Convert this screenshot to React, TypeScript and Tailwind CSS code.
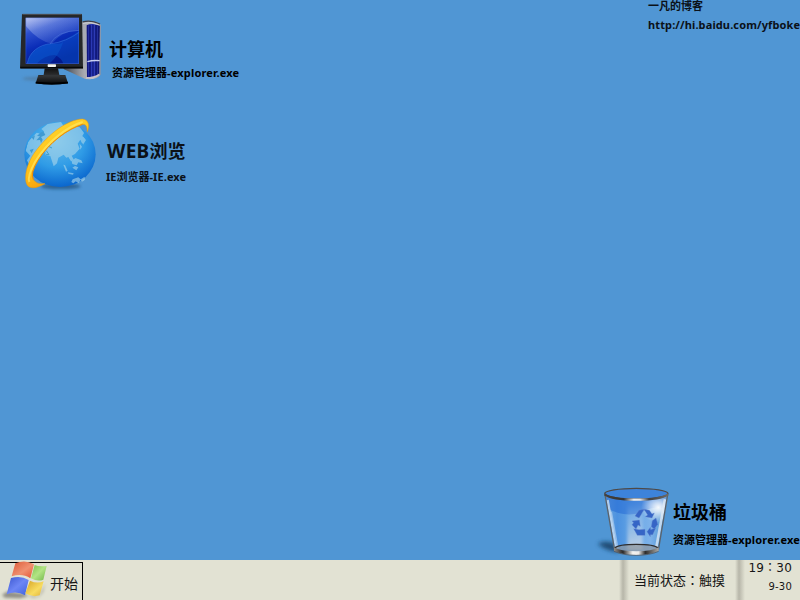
import React from "react";

const CJK = "font-['Noto_Sans','Noto_Sans_CJK_SC',sans-serif]";

function ComputerIcon() {
  return (
    <svg className="block h-[90px] w-[100px]" viewBox="0 0 300 270">
      <defs>
        <linearGradient id="screen" x1="0" y1="0" x2="0.45" y2="1">
          <stop offset="0" stopColor="#8fa2ea" />
          <stop offset="0.3" stopColor="#2c4fcd" />
          <stop offset="0.6" stopColor="#0a2db8" />
          <stop offset="1" stopColor="#031a8c" />
        </linearGradient>
        <linearGradient id="gloss" x1="0" y1="0" x2="0.8" y2="1">
          <stop offset="0" stopColor="#fff" stopOpacity=".4" />
          <stop offset="1" stopColor="#6b93f0" stopOpacity=".15" />
        </linearGradient>
        <linearGradient id="tower" x1="0" x2="1">
          <stop offset="0" stopColor="#0b0f78" />
          <stop offset="0.5" stopColor="#2638bd" />
          <stop offset="1" stopColor="#0a0d60" />
        </linearGradient>
        <linearGradient id="side" x1="0" x2="1">
          <stop offset="0" stopColor="#3c4148" />
          <stop offset="0.5" stopColor="#9b9ea5" />
          <stop offset="0.8" stopColor="#d0d1d4" />
          <stop offset="1" stopColor="#888b92" />
        </linearGradient>
        <linearGradient id="stand" x1="0" y1="0" x2="0" y2="1">
          <stop offset="0" stopColor="#111" />
          <stop offset="0.5" stopColor="#303234" />
          <stop offset="1" stopColor="#050505" />
        </linearGradient>
        <filter id="soft" x="-30%" y="-100%" width="160%" height="300%">
          <feGaussianBlur stdDeviation="5" />
        </filter>
        <clipPath id="screenClip"><path d="M47 38H207V176H47Z" /></clipPath>
      </defs>
      <ellipse cx="90" cy="221" rx="52" ry="6" fill="#50718e" opacity=".6" filter="url(#soft)" />
      <path d="M158 185L216 50Q243 42 270 56L271 210Q263 221 240 223L226 222L162 193Z" fill="url(#side)" />
      <path d="M217 52Q242 43 271 57L269 212Q254 222 225 221Z" fill="#a9abb4" />
      <path d="M230 61Q248 52 270 63L268 209Q252 218 231 216Z" fill="url(#tower)" />
      <path d="M236 61V215M244 59V216M253 59V215M262 62V212" stroke="#4654c8" strokeWidth="2" opacity=".6" />
      <path d="M240 61V215M249 59V216M258 60V214" stroke="#080a58" strokeWidth="2.5" />
      <path d="M218 51Q243 44 270 57" fill="none" stroke="#3c3f49" strokeWidth="4" />
      <path d="M218 55Q243 49 266 59" fill="none" stroke="#d2d3d8" strokeWidth="3" />
      <path d="M271 60L270 210" stroke="#9497a6" strokeWidth="3" />
      <path d="M232 170Q248 165 269 167" fill="none" stroke="#c9d0f0" strokeWidth="4" />
      <path d="M228 219Q254 219 268 208" fill="none" stroke="#c9c2c8" strokeWidth="5" />
      <path d="M36 27H216L219 190H30Z" fill="#252729" />
      <path d="M37 28H215" stroke="#505459" strokeWidth="3" />
      <path d="M31 188H219" stroke="#070707" strokeWidth="5" />
      <path d="M47 38H207V176H47Z" fill="url(#screen)" />
      <g clipPath="url(#screenClip)">
        <path d="M52 176C56 142 88 118 124 116Q170 106 207 78V176H160Q155 160 135 150Q104 150 80 176Z" fill="#0750cc" opacity=".5" />
        <path d="M52 176C56 142 88 118 124 116Q152 120 160 110Q148 150 118 176Z" fill="#0b63d8" opacity=".35" />
        <path d="M47 38H207V78Q180 77 158 88Q136 102 126 116Q84 108 47 62Z" fill="url(#gloss)" />
        <path d="M52 176C56 142 88 118 124 116Q170 110 207 82" fill="none" stroke="#3f77e0" strokeWidth="2" opacity=".7" />
        <path d="M120 117Q140 78 207 76" fill="none" stroke="#5e85e2" strokeWidth="2" opacity=".6" />
        <path d="M47 38H207V176H47Z" fill="none" stroke="#4c75e8" strokeWidth="3" opacity=".7" />
      </g>
      <rect x="113" y="178" width="25" height="8" rx="2" fill="#f0f1ef" />
      <path d="M104 190H144L148 210H166L174 235Q125 243 77 235L85 210H101Z" fill="url(#stand)" />
      <path d="M99 211H151" stroke="#3a3c3e" strokeWidth="2" />
      <path d="M77 233Q125 238 174 233" stroke="#000" strokeWidth="5" fill="none" />
    </svg>
  );
}

function GlobeIcon() {
  return (
    <svg className="block h-[90px] w-[90px]" viewBox="0 0 270 270">
      <defs>
        <radialGradient id="ocean" cx=".45" cy=".3" r=".72">
          <stop offset="0" stopColor="#62bbeb" />
          <stop offset=".55" stopColor="#2f9be6" />
          <stop offset="1" stopColor="#0863cc" />
        </radialGradient>
        <linearGradient id="ring" x1=".2" y1="0" x2=".7" y2="1">
          <stop offset="0" stopColor="#ffdc35" />
          <stop offset=".55" stopColor="#ffc018" />
          <stop offset="1" stopColor="#f38b05" />
        </linearGradient>
        <filter id="globeShadow" x="-30%" y="-100%" width="160%" height="300%"><feGaussianBlur stdDeviation="5" /></filter>
        <clipPath id="globeClip"><circle cx="135" cy="137" r="104" /></clipPath>
      </defs>
      <ellipse cx="137" cy="229" rx="60" ry="9" fill="#16426c" opacity=".6" filter="url(#globeShadow)" />
      <ellipse cx="135" cy="133" rx="107" ry="98" fill="url(#ocean)" />
      <g clipPath="url(#globeClip)" fill="#a9d6ea" opacity=".62">
        <path d="M32 122L39 96L53 80L65 68L79 72L87 64L79 57L98 42L138 36L147 50L90 90L59 132L41 161L36 151L46 137Z" />
        <path d="M90 110L126 76L171 48L194 51L207 69L202 78L210 87L202 102L196 89L188 101L194 116L180 132L170 137L177 150L168 154L160 141L154 143L146 134L130 143L126 160L116 169L106 138L92 135Z" />
        <path d="M145 164L150 165L158 182L153 185ZM159 187L176 190L174 194L160 191ZM170 153L181 144L199 151L203 160L190 157L185 166L172 162ZM172 173L180 168L190 172L184 181ZM194 101L201 110L196 119ZM204 80L213 90L204 104Z" />
        <path d="M173 208L190 202L197 208L209 200L210 211L201 215L197 209L191 220L182 214L175 220L169 216Z" />
      </g>
      <path d="M75 69L66 78L75 79L64 91L75 90L78 100L83 89L78 81L91 75L85 64ZM50 82L60 76L56 90ZM44 120L56 116L50 130Z" fill="#3f9bd4" />
      <path d="M94 122L102 134L93 133M100 109L111 114" fill="none" stroke="#459fca" strokeWidth="3" />
      <path d="M55 209Q45 190 69 151C102 97 158 57 203 43Q217 41 217 65C225 45 220 29 202 27C156 29 99 73 60 126C29 169 24 221 43 231Q58 239 90 221Q66 224 55 209Z" fill="url(#ring)" stroke="#ec9906" strokeWidth="1.5" />
      <path d="M43 216Q36 200 60 156C97 95 159 48 203 36" fill="none" stroke="#ffe65e" strokeWidth="6" opacity=".75" />
      <path d="M55 209Q45 190 69 151C102 97 158 57 203 43" fill="none" stroke="#ef8d05" strokeWidth="3" />
    </svg>
  );
}

function TrashIcon() {
  return (
    <svg className="block h-[85px] w-[90px]" viewBox="0 0 270 255">
      <defs>
        <linearGradient id="glass" x1="0" x2="1">
          <stop offset="0" stopColor="#6da6dc" />
          <stop offset=".2" stopColor="#4c92e0" />
          <stop offset=".42" stopColor="#62a3e4" />
          <stop offset=".72" stopColor="#7db2ea" />
          <stop offset="1" stopColor="#428dcd" />
        </linearGradient>
        <linearGradient id="column" x1="0" y1="0" x2="0" y2="1">
          <stop offset="0" stopColor="#cfe0f2" stopOpacity="0" />
          <stop offset="1" stopColor="#d9dde4" stopOpacity=".75" />
        </linearGradient>
        <linearGradient id="rim" x1="0" x2="1">
          <stop offset="0" stopColor="#45423e" />
          <stop offset=".3" stopColor="#353332" />
          <stop offset=".46" stopColor="#efefec" />
          <stop offset=".56" stopColor="#e7e5e3" />
          <stop offset=".7" stopColor="#424141" />
          <stop offset="1" stopColor="#6d6a67" />
        </linearGradient>
        <linearGradient id="base" x1="0" x2="1">
          <stop offset="0" stopColor="#8e8b87" />
          <stop offset=".2" stopColor="#2b2929" />
          <stop offset=".42" stopColor="#f4f4f2" />
          <stop offset=".55" stopColor="#eceae8" />
          <stop offset=".7" stopColor="#2d2c2c" />
          <stop offset="1" stopColor="#aaa8a4" />
        </linearGradient>
        <radialGradient id="shine"><stop stopColor="#fff" /><stop offset=".3" stopColor="#fff" stopOpacity=".75" /><stop offset="1" stopColor="#fff" stopOpacity="0" /></radialGradient>
        <filter id="binShadow" x="-30%" y="-50%" width="160%" height="200%"><feGaussianBlur stdDeviation="6" /></filter>
        <filter id="columnBlur" x="-40%" y="-10%" width="180%" height="120%"><feGaussianBlur stdDeviation="4" /></filter>
        <clipPath id="binClip"><path d="M44 43L73 211Q139 229 205 211L234 43Z" /></clipPath>
      </defs>
      <path d="M23 192Q43 180 72 190L90 216Q55 216 23 192" fill="#163d62" opacity=".85" filter="url(#binShadow)" />
      <path d="M44 43L73 211Q139 229 205 211L234 43Z" fill="url(#glass)" />
      <g clipPath="url(#binClip)">
        <path d="M48 50H230V88Q190 72 150 100Q95 110 58 88Z" fill="#2065d4" opacity=".5" />
        <rect x="112" y="70" width="46" height="140" fill="url(#column)" filter="url(#columnBlur)" />
        <ellipse cx="205" cy="82" rx="52" ry="46" fill="url(#shine)" opacity=".95" />
        <path d="M53 60L78 202" stroke="#d3e4f4" strokeWidth="7" opacity=".75" />
        <path d="M64 95L84 205" stroke="#c6dcf3" strokeWidth="4" opacity=".55" />
        <path d="M225 58L199 202" stroke="#e3edf6" strokeWidth="8" opacity=".75" />
      </g>
      <path d="M45 44L74 211M233 44L205 211" stroke="#5b636c" strokeWidth="4" />
      <ellipse cx="139" cy="41" rx="95" ry="16" fill="#3d83da" stroke="#4e4946" strokeWidth="4" />
      <path d="M44 43Q66 59 139 59Q212 59 234 43" fill="none" stroke="url(#rim)" strokeWidth="7" />
      <ellipse cx="139" cy="204" rx="65" ry="11" fill="#8e959d" opacity=".7" />
      <path d="M73 204Q85 193 139 193Q193 193 205 204" fill="none" stroke="#2f2d2d" strokeWidth="4" />
      <path d="M72 202Q90 214 139 214Q188 214 206 202V213Q180 225 139 225Q98 225 72 213Z" fill="url(#base)" />
      <path d="M72 214Q98 226 139 226Q180 226 206 214" fill="none" stroke="#56524e" strokeWidth="2" />
      <g fill="#3565c6" stroke="#6887cc" strokeWidth="1">
        <path d="M135 108L147 91L162 88L154 103L147 114Z" />
        <path d="M162 88L178 91L186 102L193 99L186 114L166 110L173 105Z" />
        <path d="M126 123L148 120L151 139L144 135L138 147L126 134L131 128Z" />
        <path d="M131 146L147 149L165 148V166H142Z" />
        <path d="M187 122L198 114L203 133L193 147L184 140Z" />
        <path d="M171 155L181 142L182 149L197 144L188 164L181 164V170Z" />
      </g>
    </svg>
  );
}

function StartLogo() {
  return (
    <svg className="block h-[40px] w-[48px] shrink-0" viewBox="0 24 144 120">
      <defs>
        <linearGradient id="red" x1="0" y1="0" x2="1" y2="1"><stop stopColor="#dc5a38" /><stop offset=".55" stopColor="#f09070" /><stop offset="1" stopColor="#e45131" /></linearGradient>
        <linearGradient id="green" x1="0" y1="0" x2="1" y2="1"><stop stopColor="#7cc04c" /><stop offset=".5" stopColor="#b2e484" /><stop offset="1" stopColor="#70b548" /></linearGradient>
        <linearGradient id="blue" x1="0" y1="0" x2="1" y2="1"><stop stopColor="#3a55cf" /><stop offset=".5" stopColor="#6d86f5" /><stop offset="1" stopColor="#3d62df" /></linearGradient>
        <linearGradient id="yellow" x1="0" y1="0" x2="1" y2="1"><stop stopColor="#d6a323" /><stop offset=".6" stopColor="#f8dc60" /><stop offset="1" stopColor="#dfb038" /></linearGradient>
        <filter id="logoShadow" x="-30%" y="-30%" width="160%" height="160%"><feGaussianBlur stdDeviation="4" /></filter>
      </defs>
      <path d="M6 128L24 118L76 126L84 133L60 139L14 137Z" fill="#66655e" opacity=".65" filter="url(#logoShadow)" />
      <path d="M80 128L116 132L136 92L130 120L118 134L98 138Z" fill="#77766d" opacity=".4" filter="url(#logoShadow)" />
      <path d="M46 34Q76 22 102 37L91 79Q67 63 35 73Z" fill="url(#red)" />
      <path d="M104 39Q117 45 140 42L130 83Q113 90 93 79Z" fill="url(#green)" />
      <path d="M33 78Q63 69 86 84L75 130Q49 115 20 127Z" fill="url(#blue)" />
      <path d="M90 86Q111 96 131 88L119 130Q98 137 76 124Z" fill="url(#yellow)" />
    </svg>
  );
}

function Divider() {
  return <div className="h-10 w-[10px] shrink-0 bg-linear-to-r from-[#e2e2d3] via-[#b7b6a9] via-40% to-[#e2e2d3]" />;
}

export default function App() {
  return (
    <div className={`flex h-[600px] w-[800px] flex-col overflow-hidden bg-[#5096d4] text-[#0b1118] ${CJK}`}>
      <main className="relative h-[560px] shrink-0 font-bold whitespace-nowrap">
        <div className="absolute top-[5px] left-[10px] flex">
          <ComputerIcon />
          <div className="-ml-px pt-[31px]">
            <div className="text-[18px] leading-[26px] text-black">计算机</div>
            <div className="pt-[3px] pl-[3px] text-[11px] leading-4 text-black">资源管理器<span className="tracking-[0.19px]">-explorer.exe</span></div>
          </div>
        </div>
        <div className="absolute top-[110px] left-[15px] flex">
          <GlobeIcon />
          <div className="pt-[28px] pl-px">
            <div className="pl-px text-[18px] leading-[26px]"><span className="text-[19px] tracking-[0.3px]">WEB</span>浏览</div>
            <div className="pt-[5px] text-[11px] leading-4">IE浏览器<span className="tracking-[0.1px]">-IE.exe</span></div>
          </div>
        </div>
        <div className="absolute top-0 left-[648px] text-[11px]">
          <div className="leading-3">一凡的博客</div>
          <div className="pt-[5px] leading-4 tracking-[0.12px]">http://hi.baidu.com/yfboke</div>
        </div>
        <div className="absolute top-[480px] left-[590px] flex">
          <TrashIcon />
          <div className="-ml-[7px] pt-[19px]">
            <div className="text-[18px] leading-[26px] text-black">垃圾桶</div>
            <div className="pt-[7px] text-[11px] leading-4 text-black">资源管理器<span className="tracking-[0.17px]">-explorer.exe</span></div>
          </div>
        </div>
      </main>
      <footer className="flex h-10 shrink-0 bg-[#e2e2d3] whitespace-nowrap text-[#161616]">
        <div className="mt-[2px] flex h-[38px] w-[83px] border-t border-r border-black">
          <div className="-mt-[3px]"><StartLogo /></div>
          <span className="pt-[11px] pl-[2px] text-[14px] leading-5">开始</span>
        </div>
        <div className="ml-auto flex">
          <Divider />
          <div className="w-[106px] pt-[10px] pl-[5px] text-[13px] leading-5">当前状态<span className="font-['Noto_Sans_CJK_TC',sans-serif]">：</span>触摸</div>
          <Divider />
          <div className="w-[55px] pt-px pr-2 text-right font-['DejaVu_Sans','Noto_Sans_CJK_TC',sans-serif]">
            <div className="text-[12px] leading-[14px] tracking-[0.2px]">19：30</div>
            <div className="pt-[5px] text-[10px] leading-[14px] tracking-[0.2px]">9-30</div>
          </div>
        </div>
      </footer>
    </div>
  );
}
